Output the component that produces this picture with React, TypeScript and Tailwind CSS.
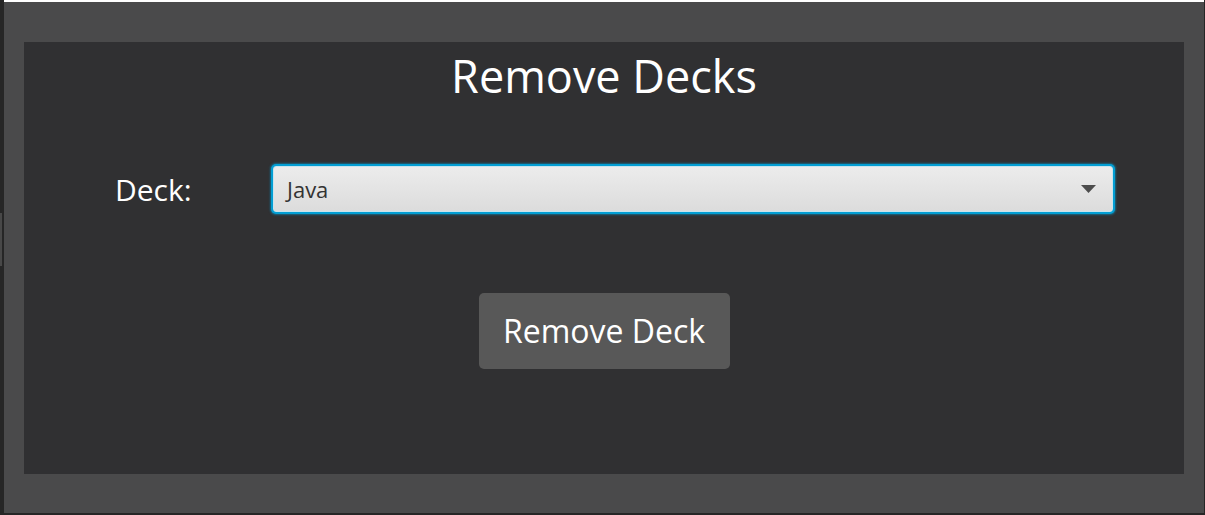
import React from "react";

export default function App() {
  const font = { fontFamily: '"Open Sans", "Noto Sans", sans-serif' };
  return (
    <div className="w-[1205px] h-[515px] bg-[#262626] pr-[1px] pb-[2px] flex" style={font}>
      <div className="w-[4px] flex flex-col">
        <div className="mt-[213px] h-[53px] w-[2px] bg-[#484848]" />
      </div>
      <div className="flex-1 flex flex-col">
        <div className="h-[2px] bg-white" />
        <div className="flex-1 bg-[#4a4a4b] pt-[40px] px-[20px] pb-[39px] flex">
          <div className="flex-1 bg-[#303032] flex flex-col items-center">
            <h1 className="mt-[4px] text-[45px] leading-[60px] text-white font-normal">Remove Decks</h1>
            <div className="w-full flex items-center mt-[58px] pl-[91px] pr-[69px]">
              <span className="text-[30px] text-white w-[156px]">Deck:</span>
              <div className="flex-1 h-[50px] rounded-[5px] bg-[#039ed3] p-[2px] shadow-[0_0_2px_1px_rgba(3,158,211,0.5)]">
                <div className="h-full rounded-[3px] border border-[#c9e4ee] bg-gradient-to-b from-[#ececec] to-[#dcdcdc] flex items-center pl-[13px] pr-[16px]">
                  <span className="flex-1 text-[22px] text-[#333333]">Java</span>
                  <svg width="15" height="9" viewBox="0 0 15 9">
                    <path d="M0 0 L15 0 L7.5 8 Z" fill="#4d4d4d" />
                  </svg>
                </div>
              </div>
            </div>
            <button className="mt-[79px] w-[251px] h-[76px] rounded-[5px] bg-[#585858] text-white text-[32px]">
              Remove Deck
            </button>
          </div>
        </div>
      </div>
    </div>
  );
}
